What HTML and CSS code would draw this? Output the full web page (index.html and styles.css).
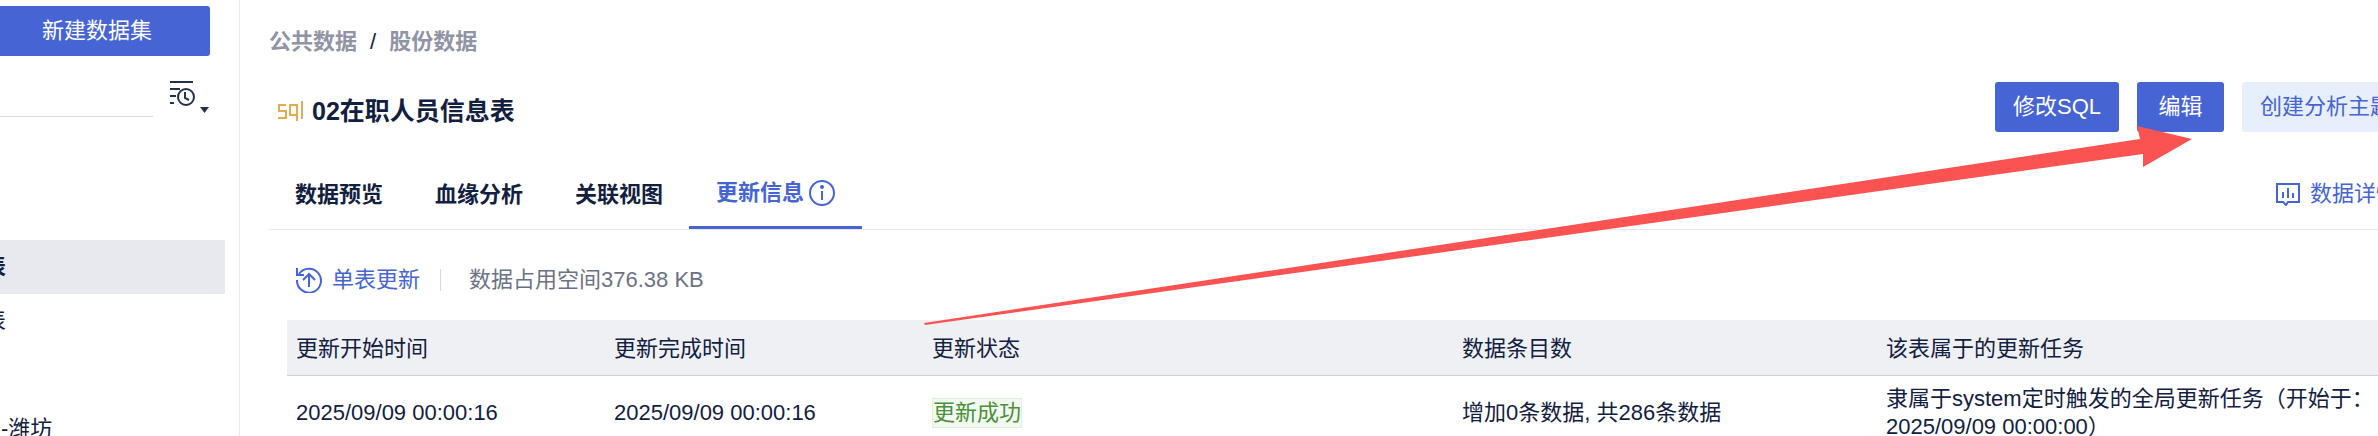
FILE: index.html
```html
<!DOCTYPE html>
<html lang="zh-CN">
<head>
  <meta charset="UTF-8">
  <meta name="viewport" content="width=device-width, initial-scale=1.0">
  <title>02在职人员信息表</title>
  <link rel="stylesheet" href="styles.css">
</head>
<body>
  <div class="page">
    <aside class="sidebar">
      <div class="sidebar-inner">
        <button class="btn btn-new">新建数据集</button>
        <div class="search-row">
          <input type="text" class="search" aria-label="搜索">
          <button class="sort-btn" aria-label="排序">
            <svg width="40" height="36" viewBox="0 0 40 36">
              <g fill="none" stroke="#26304d" stroke-width="2">
                <path d="M0 3H23M0 10H10M0 17H6M0 24H4"/>
                <circle cx="16" cy="18" r="8"/>
                <path d="M15 13V19L19 21"/>
              </g>
              <path d="M30 28H39L34.500 34Z" fill="#26304d"/>
            </svg>
          </button>
        </div>
        <ul class="tree">
          <li class="active">表</li>
          <li>表</li>
          <li></li>
          <li class="child">-潍坊</li>
        </ul>
      </div>
    </aside>

    <main class="main">
      <nav class="breadcrumb">
        <a href="#">公共数据</a>
        <span>/</span>
        <a href="#">股份数据</a>
      </nav>

      <div class="title-row">
        <svg width="25" height="20" viewBox="0 0 25 20" fill="none" stroke="#e3ab52" stroke-width="2">
          <path d="M8 4H1V10H8V17H0"/>
          <path d="M19 20V4H12V14H19"/>
          <path d="M24 0V18"/>
        </svg>
        <h1>02在职人员信息表</h1>
        <div class="actions">
          <button class="btn">修改SQL</button>
          <button class="btn">编辑</button>
          <button class="btn btn-light">创建分析主题</button>
        </div>
      </div>

      <div class="tabs">
        <button class="tab">数据预览</button>
        <button class="tab">血缘分析</button>
        <button class="tab">关联视图</button>
        <button class="tab active">更新信息
          <svg width="26" height="26" viewBox="0 0 26 26">
            <circle cx="13" cy="13" r="12" fill="none" stroke="#4664d4" stroke-width="2"/>
            <circle cx="13" cy="7" r="2" fill="#4664d4"/>
            <path d="M13 11V20" stroke="#4664d4" stroke-width="2"/>
          </svg>
        </button>
        <a href="#" class="link detail">
          <svg width="24" height="24" viewBox="0 0 24 24" fill="none" stroke="#4664d4" stroke-width="2">
            <path d="M1 2H23V20H12L10 23L7 20H1Z"/>
            <path d="M7 10V16M12 6V16M17 11V16"/>
          </svg>
          数据详情
        </a>
      </div>

      <div class="toolbar">
        <a href="#" class="link">
          <svg width="26" height="26" viewBox="0 0 26 26" fill="none" stroke="#4664d4" stroke-width="2">
            <path d="M3 7A12 12 0 1 1 1 13"/>
            <path d="M1 1V8H8"/>
            <path d="M13 20V7M7 13L13 7L19 13"/>
          </svg>
          单表更新
        </a>
        <span class="size">数据占用空间376.38 KB</span>
      </div>

      <table class="table">
        <colgroup>
          <col class="col-time">
          <col class="col-time">
          <col class="col-status">
          <col class="col-count">
          <col class="col-task">
        </colgroup>
        <thead>
          <tr>
            <th>更新开始时间</th>
            <th>更新完成时间</th>
            <th>更新状态</th>
            <th>数据条目数</th>
            <th>该表属于的更新任务</th>
          </tr>
        </thead>
        <tbody>
          <tr>
            <td>2025/09/09 00:00:16</td>
            <td>2025/09/09 00:00:16</td>
            <td><span class="tag">更新成功</span></td>
            <td>增加0条数据, 共286条数据</td>
            <td>隶属于system定时触发的全局更新任务（开始于：2025/09/09 00:00:00）</td>
          </tr>
        </tbody>
      </table>
    </main>

    <svg class="arrow" width="1270" height="202" viewBox="0 0 1270 202">
      <path d="M0 197L1216 13L1213 0L1268 13L1219 41V28L1 199Z" fill="#fb5252"/>
    </svg>
  </div>
</body>
</html>
```
FILE: styles.css
```css
* {
  box-sizing: border-box;
}
body {
  margin: 0;
  font-family: "Liberation Sans", "Noto Sans CJK SC", sans-serif;
  font-size: 22px;
  line-height: 28px;
  color: #12203f;
  background-color: #fff;
}
button,
input {
  font: inherit;
  border: none;
  padding: 0;
  background: none;
}
button {
  cursor: pointer;
}
a {
  text-decoration: none;
}
svg {
  display: block;
  flex: none;
}
.page {
  position: relative;
  display: flex;
  height: 100vh;
  overflow: hidden;
}

/* sidebar */
.sidebar {
  flex: none;
  width: 240px;
  border-right: 1px solid #e8e9ec;
}
.sidebar-inner {
  margin-left: -16px;
  padding: 6px 14px 0 0;
}
.btn {
  height: 50px;
  min-width: 87px;
  padding: 0 18px;
  border-radius: 3px;
  background-color: #4664d4;
  color: #fff;
}
.btn-light {
  background-color: #e8effc;
  color: #4664d4;
}
.btn-new {
  display: block;
  width: 226px;
}
.search-row {
  display: flex;
  gap: 17px;
  margin-top: 21px;
}
.search {
  width: 169px;
  height: 40px;
  border-bottom: 1px solid #d8dade;
}
.tree {
  list-style: none;
  margin: 123px 0 0;
  padding: 0;
}
.tree li {
  height: 54px;
  line-height: 54px;
}
.tree .active {
  background-color: #e8e9ee;
  font-weight: bold;
}
.tree .child {
  padding-left: 17px;
}

/* main area */
.main {
  flex: 1;
  margin-right: -32px;
  padding: 28px 0 0 29px;
}
.breadcrumb {
  display: flex;
  gap: 13px;
}
.breadcrumb a {
  color: #9094a4;
  font-weight: bold;
}
.title-row {
  display: flex;
  align-items: center;
  gap: 9px;
  margin-top: 26px;
  padding-left: 9px;
}
.title-row h1 {
  margin: 8px 0 0;
  font-size: 25px;
}
.title-row svg {
  margin-top: 8px;
}
.actions {
  display: flex;
  gap: 18px;
  margin-left: auto;
}
.tabs {
  display: flex;
  margin-top: 27px;
  border-bottom: 1px solid #e8e9ec;
}
.tab {
  display: flex;
  align-items: center;
  gap: 5px;
  height: 70px;
  padding: 2px 26px 0;
  color: #12203f;
  font-weight: bold;
}
.tab.active {
  padding: 0 27px;
  border-bottom: 3px solid #4664d4;
  color: #4664d4;
}
.link {
  display: flex;
  align-items: center;
  gap: 10px;
  color: #4664d4;
}
.detail {
  margin-left: auto;
  padding-right: 12px;
}
.toolbar {
  display: flex;
  align-items: center;
  height: 90px;
  padding: 10px 0 0 27px;
}
.size {
  margin-left: 20px;
  padding-left: 28px;
  border-left: 1px solid #d8dade;
  line-height: 22px;
  color: #6b7286;
}
.table {
  width: calc(100% - 21px);
  margin-left: 18px;
  table-layout: fixed;
  border-collapse: collapse;
}
.col-time {
  width: 15%;
}
.col-status {
  width: 25%;
}
.col-count {
  width: 20%;
}
.col-task {
  width: 25%;
}
.table th,
.table td {
  padding: 9px;
  text-align: left;
}
.table th {
  height: 55px;
  padding-top: 12px;
  border-bottom: 1px solid #cdd1da;
  background-color: #eff0f4;
  font-weight: normal;
}
.tag {
  display: inline-block;
  border: 1px solid #dfefdd;
  background-color: #f1f9f0;
  color: #4e8f3a;
}

/* pointer to the edit button */
.arrow {
  position: absolute;
  left: 924px;
  top: 126px;
  pointer-events: none;
}
```
